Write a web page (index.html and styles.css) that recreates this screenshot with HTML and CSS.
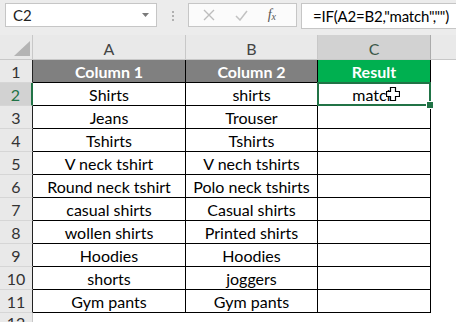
FILE: index.html
```html
<!DOCTYPE html>
<html lang="en">
<head>
  <meta charset="UTF-8" />
  <title>Excel | IF match</title>
  <link rel="stylesheet" href="styles.css">
</head>
<body>
  <div class="app">
    <div class="formula-bar">
      <div class="name-box">
        <span>C2</span>
        <svg class="drop" width="7" height="4" viewBox="0 0 7 4"><path d="M0 0h7L3.5 4z" fill="#7a7a7a"/></svg>
      </div>
      <div class="grip"><i></i><i></i><i></i></div>
      <div class="fn-box">
        <svg width="12" height="12" viewBox="0 0 12 12"><path d="M1 1l10 10M11 1L1 11" stroke="#bdbdbd" stroke-width="1.4" fill="none"/></svg>
        <svg width="13" height="11" viewBox="0 0 13 11"><path d="M1 6l4 4 7-9" stroke="#c2c2c2" stroke-width="1.5" fill="none"/></svg>
        <span class="fx">f<sub>x</sub></span>
      </div>
      <div class="formula">=IF(A2=B2,"match","")</div>
    </div>

    <div class="sheet">
      <div class="corner"><svg width="16" height="15" viewBox="0 0 16 15"><path d="M16 0v15H0z" fill="#b4b4b4"/></svg></div>
      <div class="col-head">A</div>
      <div class="col-head">B</div>
      <div class="col-head active">C</div>
      <div class="col-head blank"></div>

      <div class="row-head">1</div>
      <div class="cell head-gray">Column 1</div>
      <div class="cell head-gray">Column 2</div>
      <div class="cell head-green">Result</div>
      <div class="empty"></div>

      <div class="row-head active">2</div>
      <div class="cell">Shirts</div>
      <div class="cell">shirts</div>
      <div class="cell selected">match
        <svg class="cursor" width="14" height="14" viewBox="0 0 14 14"><path d="M4.5 .5h5v4h4v5h-4v4h-5v-4h-4v-5h4z" fill="#fff" stroke="#000" stroke-width="1.2"/></svg>
      </div>
      <div class="empty"></div>

      <div class="row-head">3</div>
      <div class="cell">Jeans</div>
      <div class="cell">Trouser</div>
      <div class="cell"></div>
      <div class="empty"></div>

      <div class="row-head">4</div>
      <div class="cell">Tshirts</div>
      <div class="cell">Tshirts</div>
      <div class="cell"></div>
      <div class="empty"></div>

      <div class="row-head">5</div>
      <div class="cell">V neck tshirt</div>
      <div class="cell">V nech tshirts</div>
      <div class="cell"></div>
      <div class="empty"></div>

      <div class="row-head">6</div>
      <div class="cell">Round neck tshirt</div>
      <div class="cell">Polo neck tshirts</div>
      <div class="cell"></div>
      <div class="empty"></div>

      <div class="row-head">7</div>
      <div class="cell">casual shirts</div>
      <div class="cell">Casual shirts</div>
      <div class="cell"></div>
      <div class="empty"></div>

      <div class="row-head">8</div>
      <div class="cell">wollen shirts</div>
      <div class="cell">Printed shirts</div>
      <div class="cell"></div>
      <div class="empty"></div>

      <div class="row-head">9</div>
      <div class="cell">Hoodies</div>
      <div class="cell">Hoodies</div>
      <div class="cell"></div>
      <div class="empty"></div>

      <div class="row-head">10</div>
      <div class="cell">shorts</div>
      <div class="cell">joggers</div>
      <div class="cell"></div>
      <div class="empty"></div>

      <div class="row-head">11</div>
      <div class="cell">Gym pants</div>
      <div class="cell">Gym pants</div>
      <div class="cell"></div>
      <div class="empty"></div>

      <div class="row-head last">12</div>
      <div class="empty"></div>
      <div class="empty"></div>
      <div class="empty"></div>
      <div class="empty"></div>
    </div>
  </div>
</body>
</html>
```

FILE: styles.css
```css
:root {
  --bar-gray: #ececec;
  --head-gray: #e9e9e9;
  --head-active: #d2d2d2;
  --head-line: #c8c8c8;
  --excel-green: #217346;
  --fill-green: #00b050;
  --fill-gray: #808080;
}

body {
  margin: 0;
  font-family: Lato, "Liberation Sans", sans-serif;
  color: #000;
  background: #fff;
}

.app {
  width: 456px;
  height: 322px;
  overflow: hidden;
}

/* formula bar */

.formula-bar {
  display: flex;
  align-items: flex-start;
  height: 35px;
  padding-top: 3px;
  box-sizing: border-box;
  background: var(--bar-gray);
}

.name-box {
  display: flex;
  align-items: center;
  justify-content: space-between;
  width: 152px;
  height: 24px;
  margin-left: 5px;
  padding: 0 7px;
  box-sizing: border-box;
  background: #fff;
  border: 1px solid #c6c6c6;
  font-size: 15px;
  color: #222;
}

.grip {
  display: flex;
  flex-direction: column;
  gap: 2px;
  width: 31px;
  align-items: center;
  padding-top: 8px;
}

.grip i {
  width: 2px;
  height: 2px;
  background: #b0b0b0;
}

.fn-box {
  display: flex;
  align-items: center;
  justify-content: space-around;
  width: 109px;
  height: 24px;
  padding: 0 10px 0 4px;
  box-sizing: border-box;
  background: #fbfbfb;
  border: 1px solid #c6c6c6;
}

.fx {
  font-family: "Liberation Serif", serif;
  font-style: italic;
  font-size: 14px;
  color: #555;
}

.fx sub {
  font-size: 10px;
  vertical-align: -1px;
}

.formula {
  flex: 1;
  height: 24px;
  margin-left: 4px;
  padding-left: 11px;
  line-height: 24px;
  background: #fff;
  border: 1px solid #c6c6c6;
  border-right: none;
  font-size: 15px;
  letter-spacing: -0.2px;
  white-space: nowrap;
}

/* sheet grid */

.sheet {
  display: grid;
  grid-template-columns: 33px 153px 132px 113px 1fr;
  grid-template-rows: 25px repeat(11, 23px) 23px;
  font-size: 16px;
}

.sheet > div {
  box-sizing: border-box;
  display: flex;
  align-items: center;
  justify-content: center;
  white-space: nowrap;
}

.corner {
  background: var(--head-gray);
  border-right: 1px solid var(--head-line);
  border-bottom: 1px solid var(--head-line);
  align-items: flex-end !important;
  justify-content: flex-end !important;
  padding: 0 2px 3px 0;
}

.col-head {
  background: var(--head-gray);
  border-right: 1px solid var(--head-line);
  border-bottom: 1px solid var(--head-line);
  color: #444;
  padding-top: 2px;
}

.col-head.active {
  background: var(--head-active);
  color: #3a5848;
  border-right-color: #ababab;
}

.col-head.blank {
  border-right: none;
}

.row-head {
  background: var(--head-gray);
  border-right: 1px solid #222;
  border-bottom: 1px solid #d6d6d6;
  color: #333;
}

.row-head.active {
  background: var(--head-active);
  color: var(--excel-green);
  border-right: 2px solid var(--excel-green);
}

.row-head.last {
  border-right-color: var(--head-line);
  align-items: flex-start !important;
}

.cell {
  border-right: 1px solid #000;
  border-bottom: 1px solid #000;
}

.head-gray {
  background: var(--fill-gray);
  color: #fff;
  font-weight: bold;
}

.head-green {
  background: var(--fill-green);
  color: #fff;
  font-weight: bold;
}

.selected {
  position: relative;
}

.selected::before {
  content: "";
  position: absolute;
  top: -1px;
  left: -1px;
  right: -1px;
  bottom: -1px;
  border: 2px solid var(--excel-green);
}

.selected::after {
  content: "";
  position: absolute;
  right: -4px;
  bottom: -4px;
  width: 6px;
  height: 6px;
  background: var(--excel-green);
  border: 1px solid #fff;
}

.cursor {
  position: absolute;
  left: 68px;
  top: 4px;
}
```
